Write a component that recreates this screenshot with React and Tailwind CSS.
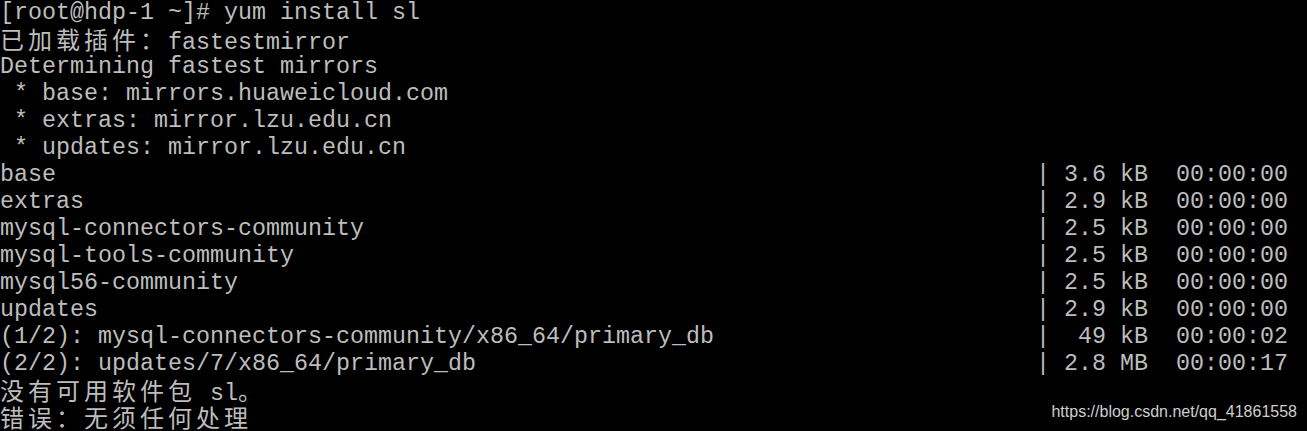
import React from 'react';

const rows = [
    ['[root@hdp-1 ~]# yum install sl'],
    ['已加载插件：fastestmirror'],
    ['Determining fastest mirrors'],
    [' * base: mirrors.huaweicloud.com'],
    [' * extras: mirror.lzu.edu.cn'],
    [' * updates: mirror.lzu.edu.cn'],
    ['base', '| 3.6 kB  00:00:00'],
    ['extras', '| 2.9 kB  00:00:00'],
    ['mysql-connectors-community', '| 2.5 kB  00:00:00'],
    ['mysql-tools-community', '| 2.5 kB  00:00:00'],
    ['mysql56-community', '| 2.5 kB  00:00:00'],
    ['updates', '| 2.9 kB  00:00:00'],
    ['(1/2): mysql-connectors-community/x86_64/primary_db', '|  49 kB  00:00:02'],
    ['(2/2): updates/7/x86_64/primary_db', '| 2.8 MB  00:00:17'],
    ['没有可用软件包 sl。'],
    ['错误：无须任何处理'],
];

// CJK chars take two terminal cells (28px)
const isWide = (ch) => ch.charCodeAt(0) > 0x2e80;

function TermText({ text }) {
    const parts = [];
    let buf = '';
    [...text].forEach((ch, i) => {
        if (isWide(ch)) {
            if (buf) {
                parts.push(<span key={'a' + i}>{buf}</span>);
                buf = '';
            }
            parts.push(
                <span
                    key={'w' + i}
                    className="inline-block w-[28px] text-[24px] font-['Noto_Sans_CJK_SC',sans-serif] leading-none"
                >
                    {ch}
                </span>
            );
        } else {
            buf += ch;
        }
    });
    if (buf) parts.push(<span key="end">{buf}</span>);
    return <>{parts}</>;
}

export default function App() {
    return (
        <div className="relative w-[1307px] h-[431px] overflow-hidden bg-black text-[#bdbdbd] font-['Liberation_Mono',monospace] text-[23.33px] leading-[27px]">
            {rows.map((row, i) => (
                <div key={i} className="flex h-[27px] whitespace-pre">
                    <div className={row[1] ? 'w-[1036px] shrink-0' : ''}>
                        <TermText text={row[0]} />
                    </div>
                    {row[1] && <div>{row[1]}</div>}
                </div>
            ))}
            <div className="absolute right-[10px] bottom-[10px] font-['Liberation_Sans',Arial,sans-serif] text-[16px] leading-[18px] text-[#cfcfcf]">
                https://blog.csdn.net/qq_41861558
            </div>
        </div>
    );
}
